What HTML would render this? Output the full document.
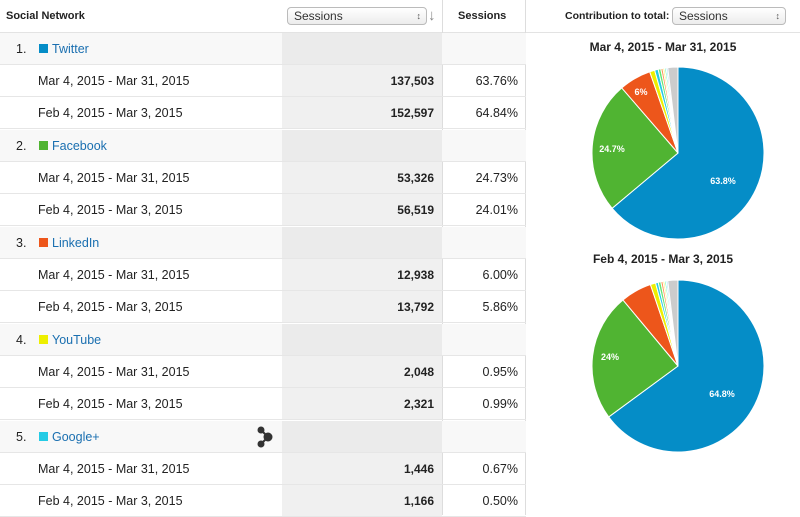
<!DOCTYPE html>
<html><head><meta charset="utf-8"><style>
*{margin:0;padding:0;box-sizing:border-box}
body{width:800px;height:515px;overflow:hidden;background:#fff;font-family:"Liberation Sans",Arial,sans-serif;font-size:12.5px;color:#222;position:relative}
.a{position:absolute;white-space:nowrap}
.row{position:absolute;left:0;width:526px;height:32px;border-bottom:1px solid #e6e6e6}
.g{background:#f8f8f8}
.shade{position:absolute;left:282px;width:160px;height:100%;top:0;background:#f0f0f0}
.g .shade{background:#ebebeb}
.t{position:absolute;top:0;line-height:32px;white-space:nowrap}
.num{right:92px;font-weight:bold;text-align:right;font-size:12px}
.pct{right:8px;text-align:right}
.lnk{color:#1a6fb0}
.sq{display:inline-block;width:9px;height:9px;margin-right:4px;vertical-align:0}
.sel{position:absolute;height:18px;border:1px solid #bbb;border-radius:4px;background:linear-gradient(#fff,#ececec);font-size:12px;line-height:16px;padding-left:6px;color:#333}
.sel:after{content:"\2195";position:absolute;right:5px;top:0;font-size:9px;color:#555}
</style></head><body>
<div class="a" style="left:0;top:0;width:800px;height:33px;border-bottom:1px solid #e3e3e3"></div>
<div class="a" style="left:442px;top:0;width:1px;height:515px;background:#ddd"></div>
<div class="a" style="left:525px;top:0;width:1px;height:515px;background:#ddd"></div>
<div class="a" style="left:6px;top:10px;font-weight:bold;font-size:11px">Social Network</div>
<div class="sel" style="left:287px;top:7px;width:140px">Sessions</div>
<div class="a" style="left:428px;top:7px;font-size:15px;color:#888">&#8595;</div>
<div class="a" style="left:458px;top:10px;font-weight:bold;font-size:11px">Sessions</div>
<div class="a" style="left:565px;top:10px;font-weight:bold;font-size:10.5px">Contribution to total:</div>
<div class="sel" style="left:672px;top:7px;width:114px">Sessions</div>

<div id="rows"></div>

<svg class="a" style="left:253px;top:424px" width="24" height="26" viewBox="0 0 24 26"><g fill="#333" stroke="#333" stroke-width="2"><line x1="8" y1="6" x2="15" y2="13"/><line x1="8" y1="20" x2="15" y2="13"/><circle cx="8" cy="6" r="2.5"/><circle cx="8" cy="20" r="2.5"/><circle cx="15" cy="13" r="3.5"/></g></svg>

<div class="a" style="left:526px;top:40px;width:274px;text-align:center;font-weight:bold;font-size:12px">Mar 4, 2015 - Mar 31, 2015</div>
<div class="a" style="left:526px;top:252px;width:274px;text-align:center;font-weight:bold;font-size:12px">Feb 4, 2015 - Mar 3, 2015</div>
<svg id="pies" class="a" style="left:0;top:0" width="800" height="515"></svg>

<script>
var data=[
["1.","Twitter","#058dc7",["137,503","63.76%"],["152,597","64.84%"]],
["2.","Facebook","#50b432",["53,326","24.73%"],["56,519","24.01%"]],
["3.","LinkedIn","#ed561b",["12,938","6.00%"],["13,792","5.86%"]],
["4.","YouTube","#edef00",["2,048","0.95%"],["2,321","0.99%"]],
["5.","Google+","#24cbe5",["1,446","0.67%"],["1,166","0.50%"]]];
var h="";
data.forEach(function(d,i){
 var y=33+i*97;
 h+='<div class="row g" style="top:'+y+'px"><div class="shade"></div><div class="t" style="left:16px">'+d[0]+'</div><div class="t lnk" style="left:39px"><span class="sq" style="background:'+d[2]+'"></span>'+d[1]+'</div></div>';
 [["Mar 4, 2015 - Mar 31, 2015",d[3]],["Feb 4, 2015 - Mar 3, 2015",d[4]]].forEach(function(s,j){
  h+='<div class="row" style="top:'+(y+32*(j+1))+'px"><div class="shade"></div><div class="t" style="left:38px">'+s[0]+'</div><div class="t num">'+s[1][0]+'</div><div class="t pct">'+s[1][1]+'</div></div>';
 });
});
document.getElementById("rows").innerHTML=h;
var cols=["#058dc7","#50b432","#ed561b","#edef00","#24cbe5","#64e572","#ff9655","#fff263","#6af9c4","#b2deff","#cccccc"];
function pie(cx,cy,r,vals,labels){
 var s=document.getElementById("pies"),tot=0,a=0,out="";
 vals.forEach(function(v){tot+=v});
 vals.forEach(function(v,i){
  var a0=a/tot*2*Math.PI,a1=(a+v)/tot*2*Math.PI;a+=v;
  var x0=cx+r*Math.sin(a0),y0=cy-r*Math.cos(a0),x1=cx+r*Math.sin(a1),y1=cy-r*Math.cos(a1);
  out+='<path d="M'+cx+' '+cy+'L'+x0+' '+y0+'A'+r+' '+r+' 0 '+((a1-a0)>Math.PI?1:0)+' 1 '+x1+' '+y1+'Z" fill="'+cols[i]+'" stroke="#fff" stroke-width="1"/>';
 });
 labels.forEach(function(l){out+='<text x="'+l[0]+'" y="'+l[1]+'" fill="#fff" font-size="9" font-weight="bold" font-family="Liberation Sans,Arial,sans-serif" text-anchor="middle">'+l[2]+'</text>'});
 s.innerHTML+=out;
}
pie(678,153,86,[63.76,24.73,6.0,0.95,0.67,0.5,0.4,0.3,0.3,0.3,1.9],[[723,184,"63.8%"],[612,152,"24.7%"],[641,95,"6%"]]);
pie(678,366,86,[64.84,24.01,5.86,0.99,0.5,0.5,0.4,0.3,0.3,0.3,1.9],[[722,397,"64.8%"],[610,360,"24%"]]);
</script>
</body></html>
